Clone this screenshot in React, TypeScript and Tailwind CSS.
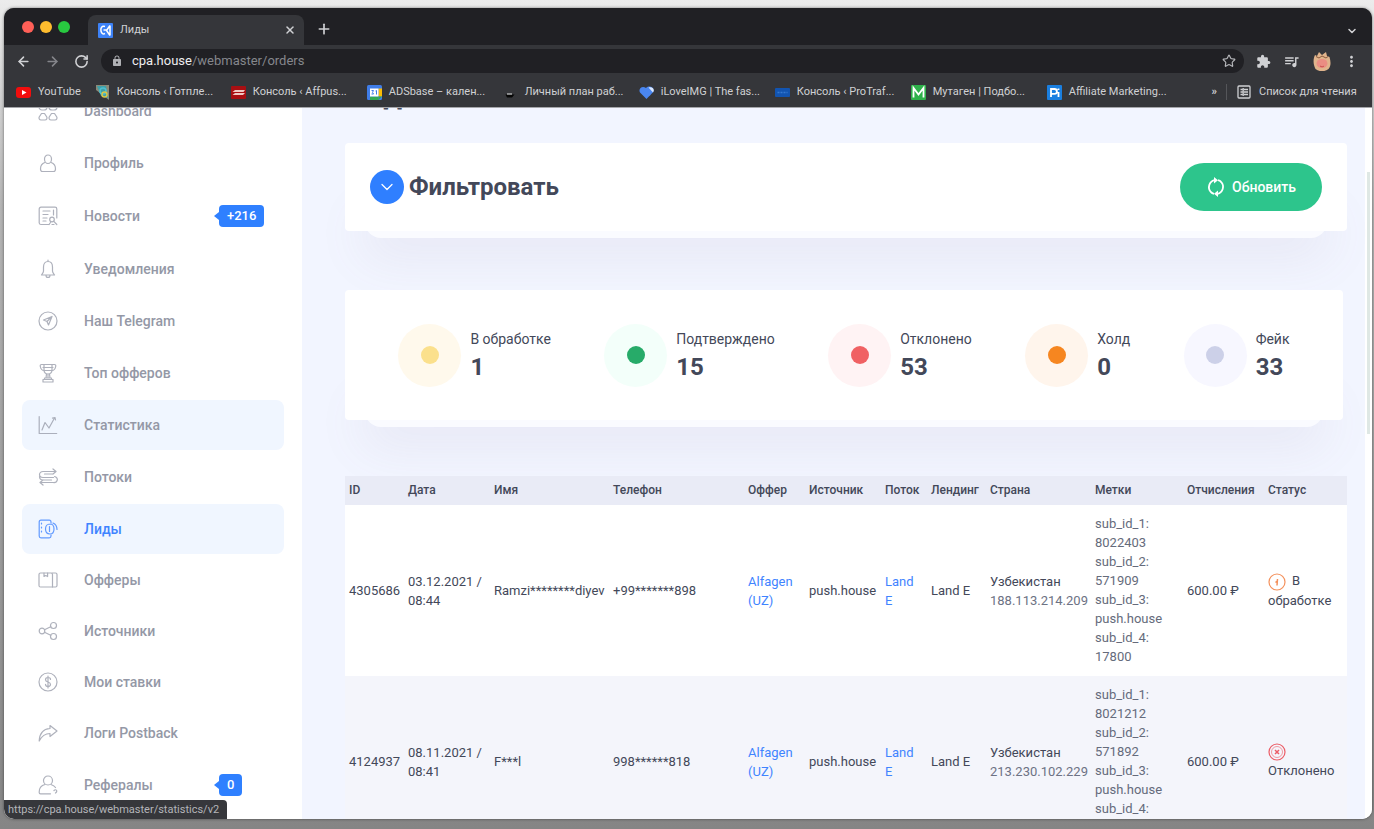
import type { ReactNode } from "react";
import { ArrowLeft, ArrowRight, ChevronDown, Plus, RotateCw, Star, X } from "lucide-react";
import { MdExtension, MdLock, MdMoreVert, MdQueueMusic } from "react-icons/md";

type NavItem = { label: string; icon: ReactNode; state?: "hover" | "active"; badge?: string };

function Line({ children }: { children: ReactNode }) {
  return (
    <svg
      className="size-5 shrink-0"
      viewBox="0 0 20 20"
      fill="none"
      stroke="currentColor"
      strokeWidth="1.2"
      strokeLinecap="round"
      strokeLinejoin="round"
      aria-hidden="true"
    >
      {children}
    </svg>
  );
}

const primaryNav: NavItem[] = [
  {
    label: "Dashboard",
    icon: (
      <Line>
        <rect x="1" y="1" width="8" height="8" rx="3" />
        <rect x="11" y="1" width="8" height="8" rx="3" />
        <path d="M3.5 12.5h3l2.3 3.5c.6 1.5-.2 3-1.8 3H3c-1.6 0-2.4-1.5-1.8-3zM13.5 12.5h3l2.3 3.5c.6 1.5-.2 3-1.8 3h-4c-1.6 0-2.4-1.5-1.8-3z" />
      </Line>
    ),
  },
  {
    label: "Профиль",
    icon: (
      <Line>
        <path d="M6.5 6a3.5 4 0 0 1 7 0c0 2.5-1.5 4.5-3.5 4.5S6.5 8.5 6.5 6z" />
        <path d="M6.8 9.5C4 10.5 2.5 12.5 2.5 16c0 1.500.5 2.5 2 2.5h11c1.5 0 2-1 2-2.5 0-3.500-1.5-5.500-4.300-6.500" />
      </Line>
    ),
  },
  {
    label: "Новости",
    badge: "+216",
    icon: (
      <Line>
        <path d="M11 18.500H3A1.800 1.800 0 0 1 1.200 17V3A1.800 1.800 0 0 1 3 1.200h14A1.800 1.800 0 0 1 18.800 3v9" />
        <path d="M5 5h7M5 8.500h5M5 12h4M5 15h3M15.500 4v5" />
        <circle cx="14" cy="13.500" r="2.300" />
        <path d="m15.800 15.300 3 3.200M11 18.500l1.500-2M16 18.500h-2" />
      </Line>
    ),
  },
  {
    label: "Уведомления",
    icon: (
      <Line>
        <path d="M10 1v1.500M10 2.500c-3 0-4.500 2.500-4.500 5.500v4c0 2-1.500 2.500-2 4h13c-.5-1.500-2-2-2-4V8c0-3-1.500-5.500-4.500-5.500zM8 16.200c0 3 4 3 4 0" />
      </Line>
    ),
  },
  {
    label: "Наш Telegram",
    icon: (
      <Line>
        <circle cx="10" cy="10" r="9" />
        <path d="m5.500 9 8.500-3.500-3.500 8.500-1.500-3.500zM9 10.500l5-5" />
      </Line>
    ),
  },
  {
    label: "Топ офферов",
    icon: (
      <Line>
        <path d="M3.500 1.500h13c1 0 1.500.8 1.200 2-.5 2.500-1.700 4-3.700 4H6c-2 0-3.200-1.500-3.700-4-.3-1.200.2-2 1.200-2z" />
        <path d="M6 1.500v5c0 3 1.500 4.500 4 4.500s4-1.500 4-4.500v-5M5 4.500h10M8.500 11l-.5 4M11.500 11l.5 4M10 12v2M6.500 15h7v1.500h-7zM5 19h10v-2.500H5z" />
      </Line>
    ),
  },
  {
    label: "Статистика",
    state: "hover",
    icon: (
      <Line>
        <path d="M1.200 1.500v17h17.500" />
        <path d="m4 15 3-7.500 4 5.500 5.500-10M14.500 3.200l2.500-.7.500 2.500" />
      </Line>
    ),
  },
  {
    label: "Потоки",
    icon: (
      <Line>
        <path d="M15 2l3 2.500L15 7M18 4.500H5a3.500 3 0 0 0 0 6h10.500M15 7H6.500M5 13l-3 2.500L5 18M2 15.500h13a3.500 3 0 0 0 1.500-6M5 13h8.500M1.500 9.500c0 2 1 3.500 3.500 3.500" />
      </Line>
    ),
  },
  {
    label: "Лиды",
    state: "active",
    icon: (
      <Line>
        <path d="M13 4V3c0-1-.6-1.800-1.800-1.800H3C1.800 1.200 1.200 2 1.200 3v14c0 1 .6 1.800 1.800 1.800h8.200c1.200 0 1.800-.8 1.800-1.800v-1" />
        <path d="M3.500 4v12" strokeDasharray="1 3" />
        <path d="M12 5c-2.800 0-4.500 2.200-4.500 5s1.700 5 4.500 5 4-2.200 4-5-1.200-5-4-5zM11.500 7.500v5M15 4c2.500 1 4 3 4 6.500" />
      </Line>
    ),
  },
];

const secondaryNav: NavItem[] = [
  {
    label: "Офферы",
    icon: (
      <Line>
        <path d="M2.500 3h10.500c1 0 1.500.5 1.500 1.500v12.500H2.500c-1 0-1.500-.5-1.500-1.500v-11C1 3.500 1.500 3 2.500 3z" />
        <path d="M14 3h3.500c1 0 1.500.5 1.500 1.500v11c0 1-.5 1.500-1.500 1.500h-3M6 3v3.500l1.800-1 1.800 1V3" />
      </Line>
    ),
  },
  {
    label: "Источники",
    icon: (
      <Line>
        <circle cx="4" cy="10" r="2.800" />
        <circle cx="15.500" cy="4.500" r="3" />
        <circle cx="15.500" cy="15.500" r="3" />
        <path d="m6.500 8.800 6.200-3M6.500 11.200l6.200 3" />
      </Line>
    ),
  },
  {
    label: "Мои ставки",
    icon: (
      <Line>
        <circle cx="10" cy="10" r="9" />
        <path d="M12.500 7.500C12.500 6 11.500 5.500 10 5.500S7.500 6.300 7.500 7.700c0 3 5 1.600 5 4.600 0 1.400-1 2.200-2.500 2.200s-2.500-.7-2.500-2.200M10 4v12" />
      </Line>
    ),
  },
  {
    label: "Логи Postback",
    icon: (
      <Line>
        <path d="M12 2.500 19 8l-7 5.500V10.500c-5 0-8 2-10.800 7.500C1.500 10.500 5 6 12 5.500z" />
      </Line>
    ),
  },
  {
    label: "Рефералы",
    badge: "0",
    icon: (
      <Line>
        <circle cx="10" cy="5.500" r="4.500" />
        <path d="M7 9.500c-4 1-6 3.500-5.800 8 0 .8.500 1.300 1.300 1.300h10M13 9.500c2 .7 3.500 1.500 4.500 3M16 15.500c2-2 4 .5 1.500 2.500" />
      </Line>
    ),
  },
];

function NavRow({ item }: { item: NavItem }) {
  const tone =
    item.state === "active"
      ? "bg-[#f0f6ff] text-[#3f84ff] h-[50px]"
      : item.state === "hover"
        ? "bg-[#f0f6ff] text-[#9498a6] h-[50px]"
        : item.badge
          ? "text-[#9498a6] h-[52px]"
          : "text-[#9498a6] h-[50px]";
  return (
    <li>
      <a href="#" className={`flex items-center rounded-lg pl-4 ${tone}`}>
        <span className={item.state === "active" ? "opacity-80" : "opacity-75"}>{item.icon}</span>
        <span className="ml-[26px] w-[130px] text-[14px] leading-5 font-medium">{item.label}</span>
        {item.badge && (
          <span className="flex items-center">
            <span className="border-y-4 border-r-[5px] border-y-transparent border-r-[#2f80ff]" />
            <span className="rounded-[4px] bg-[#2f80ff] px-2 text-[13px] leading-[22px] font-medium text-white">
              {item.badge}
            </span>
          </span>
        )}
      </a>
    </li>
  );
}

const bookmarks: { label: string; icon: ReactNode }[] = [
  {
    label: "Консоль ‹ Готпле...",
    icon: (
      <>
        <path d="M1 0h13v15L1 5z" fill="#8a8a78" />
        <path d="M2 1h9l2 12-7-2z" fill="#3f9fa8" />
        <circle cx="8" cy="6" r="3" fill="none" stroke="#4fc0d0" strokeWidth="1.500" />
        <circle cx="9.500" cy="9.500" r="2.500" fill="none" stroke="#d8c648" strokeWidth="1.500" />
      </>
    ),
  },
  {
    label: "Консоль ‹ Affpus...",
    icon: (
      <>
        <rect y="1" width="15" height="13" rx="1" fill="#a80f12" />
        <path d="M1.500 7 4 5h10l-1.500 2zM1.500 10 4 8h10l-2 2z" fill="#f0c9c4" />
      </>
    ),
  },
  {
    label: "ADSbase – кален...",
    icon: (
      <>
        <rect width="15" height="15" rx="1.500" fill="#3f7de8" />
        <path d="M11.500 3.500H15v8h-3.500z" fill="#fbbc05" />
        <path d="M3 11.500h8.500V15H3z" fill="#34a853" />
        <path d="M3 3.500h8.500v8H3z" fill="#fff" />
        <path d="m4.500 5.500 2 0-1 1.800 1 1.700h-2M8.500 6l1-.5v4" fill="none" stroke="#3f7de8" />
        <path d="M11.500 15v-3.500H15z" fill="#34a853" />
      </>
    ),
  },
  {
    label: "Личный план раб...",
    icon: (
      <>
        <path d="M2.500 9.500h9L9 12.500H4z" fill="#060606" />
        <path d="M4 9h5" stroke="#e8e8e8" strokeWidth="1.200" />
      </>
    ),
  },
  {
    label: "iLoveIMG | The fas...",
    icon: (
      <>
        <path d="M7.500 14 1 7.500C-1 4 3 0 7 3c3-3 8-1 7.500 2.500C14.500 7 14 7.500 7.500 14z" fill="#4a86f0" />
        <path d="m9.500 2.500 4.500 5c1.500-2 1-6-4.500-5z" fill="#dce9ff" />
      </>
    ),
  },
  {
    label: "Консоль ‹ ProTraf...",
    icon: (
      <>
        <rect y="3" width="15" height="9" rx="1" fill="#1254b0" />
        <path d="M2.500 7.500h10" stroke="#3478d0" strokeWidth="1.500" strokeDasharray="2 1" />
      </>
    ),
  },
  {
    label: "Мутаген | Подбо...",
    icon: (
      <>
        <rect width="15" height="15" rx="1" fill="#2eb14a" />
        <path d="M2.500 12.500V3l5 6.500 5-6.500v9.500" fill="none" stroke="#fff" strokeWidth="1.800" />
      </>
    ),
  },
  {
    label: "Affiliate Marketing...",
    icon: (
      <>
        <rect width="15" height="15" rx="1" fill="#1a7fe0" />
        <path d="M4 12V4h3.500a2.300 2.300 0 0 1 0 4.800H4M11.500 7v5M11.500 3.500v1.500" fill="none" stroke="#fff" strokeWidth="1.800" />
      </>
    ),
  },
];

function BrowserChrome() {
  return (
    <header className="z-10 shrink-0 bg-[#35363a] text-[#d0d1d4]">
      <div className="flex h-[37px] items-end bg-[#202024]">
        <div className="flex w-[84px] shrink-0 gap-[6px] self-center pl-[18px]">
          <span className="size-3 rounded-full bg-[#ff5f57]" />
          <span className="size-3 rounded-full bg-[#febc2e]" />
          <span className="size-3 rounded-full bg-[#28c840]" />
        </div>
        <div className="flex h-[30px] w-[216px] items-center rounded-t-lg bg-[#35363a] pr-2 pl-[10px]">
          <svg className="size-[15px]" viewBox="0 0 15 15" aria-hidden="true">
            <rect width="15" height="15" rx="1" fill="#3d82f7" />
            <path d="M7 3.500C3.500 2.500 2.500 5.500 3 8s2 3.500 4 2.500M12 2.500 8.500 7.500l3.500 5M5.500 7h3M12 2.500v10" fill="none" stroke="#fff" strokeWidth="1.500" />
          </svg>
          <span className="ml-[7px] flex-1 text-[11px] leading-4">Лиды</span>
          <button type="button" aria-label="Закрыть вкладку">
            <X className="size-3" strokeWidth={3} />
          </button>
        </div>
        <button type="button" aria-label="Новая вкладка" className="mb-2 ml-3">
          <Plus className="size-4" strokeWidth={2.5} />
        </button>
        <button type="button" aria-label="Поиск вкладок" className="mr-[14px] mb-2 ml-auto">
          <ChevronDown className="size-3" strokeWidth={3} />
        </button>
      </div>

      <div className="flex h-8 items-center pr-3 pl-3">
        <button type="button" aria-label="Назад">
          <ArrowLeft className="size-[15px]" strokeWidth={2.5} />
        </button>
        <button type="button" aria-label="Вперёд" className="ml-[14px] text-[#84858a]">
          <ArrowRight className="size-[15px]" strokeWidth={2.5} />
        </button>
        <button type="button" aria-label="Обновить страницу" className="ml-[14px]">
          <RotateCw className="size-[15px]" strokeWidth={2.5} />
        </button>
        <div className="ml-3 flex h-6 flex-1 items-center rounded-full bg-[#202024] pr-2 pl-[10px]">
          <MdLock className="size-3 text-[#b0b1b5]" />
          <a href="#" className="ml-[9px] flex-1 text-[13px] leading-4 text-[#85878c]">
            <span className="text-[#eeeef0]">cpa.house</span>/webmaster/orders
          </a>
          <button type="button" aria-label="Добавить в закладки">
            <Star className="size-[14px] text-[#b5b6ba]" />
          </button>
        </div>
        <div className="ml-3 flex items-center gap-3">
          <button type="button" aria-label="Расширения">
            <MdExtension className="size-[15px]" />
          </button>
          <button type="button" aria-label="Управление медиа">
            <MdQueueMusic className="size-[17px]" />
          </button>
          <button type="button" aria-label="Профиль Chrome">
            <svg className="size-5" viewBox="0 0 20 20" aria-hidden="true">
              <path d="M3 4l2 1 2-4 3 3 4-3 1 4 2.500 1c1.500 5 1.500 9-1 12-4 3-9 3-13 0C1 13 1 8 3 4z" fill="#e0b48c" />
              <path d="M4 5.500l3 1.500 3-2 4 2 2-1.500" fill="none" stroke="#8a5a3c" />
              <ellipse cx="10" cy="12.500" rx="5.500" ry="4.500" fill="#ea8d83" />
              <path d="M8 15c1.500 1 3 1 4 0" stroke="#c94f4c" fill="none" />
            </svg>
          </button>
          <button type="button" aria-label="Меню" className="-ml-px">
            <MdMoreVert className="size-[17px]" />
          </button>
        </div>
      </div>

      <nav aria-label="Закладки" className="flex h-[30px] items-center px-3 text-[11px] leading-4 whitespace-nowrap">
        <a href="#" className="flex items-center gap-[7px]">
          <svg className="size-[15px]" viewBox="0 0 15 15" aria-hidden="true">
            <rect y="2" width="15" height="11" rx="3" fill="#f20d0d" />
            <path d="m6 5 4.500 2.500L6 10z" fill="#fff" />
          </svg>
          YouTube
        </a>
        <div className="ml-[14px] flex flex-1 gap-[15px] overflow-hidden">
          {bookmarks.map((b) => (
            <a key={b.label} href="#" className="flex shrink-0 items-center gap-[7px]">
              <svg className="size-[15px]" viewBox="0 0 15 15" aria-hidden="true">
                {b.icon}
              </svg>
              <span className="w-[99px]">{b.label}</span>
            </a>
          ))}
        </div>
        <button type="button" aria-label="Другие закладки" className="mr-[9px] font-bold">
          »
        </button>
        <button type="button" className="flex items-center gap-2 border-l border-[#55565a] pl-[10px]">
          <svg className="size-[14px]" viewBox="0 0 14 14" fill="none" stroke="currentColor" strokeWidth="1.300" aria-hidden="true">
            <rect x="1" y="1" width="12" height="12" rx="1" />
            <path d="M3.500 4.500h2M7 4.500h4M3.500 7h2M7 7h4M3.500 9.500h2M7 9.500h4M6.200 3v8" />
          </svg>
          <span className="w-[101px] text-left">Список для чтения</span>
        </button>
      </nav>
    </header>
  );
}

function Card({ children, className }: { children: ReactNode; className: string }) {
  return (
    <div className={`relative isolate ${className}`}>
      <span className="absolute inset-x-5 -bottom-[7px] -z-10 h-10 rounded-b-2xl bg-[#fafbff] shadow-[0_18px_48px_4px_rgba(130,110,140,0.09)]" />
      {children}
    </div>
  );
}

const stats = [
  { label: "В обработке", value: "1", ring: "bg-[#fff9ec]", dot: "bg-[#fbe08c]" },
  { label: "Подтверждено", value: "15", ring: "bg-[#f3fffa]", dot: "bg-[#27ab69]" },
  { label: "Отклонено", value: "53", ring: "bg-[#fff3f4]", dot: "bg-[#f06163]" },
  { label: "Холд", value: "0", ring: "bg-[#fff5ec]", dot: "bg-[#f68620]" },
  { label: "Фейк", value: "33", ring: "bg-[#f7f7ff]", dot: "bg-[#ccd0e8]" },
];

const columns = [
  { title: "ID", width: "w-[59px]" },
  { title: "Дата", width: "w-[86px]" },
  { title: "Имя", width: "w-[119px]" },
  { title: "Телефон", width: "" },
  { title: "Оффер", width: "w-[61px]" },
  { title: "Источник", width: "w-[76px]" },
  { title: "Поток", width: "w-[46px]" },
  { title: "Лендинг", width: "w-[59px]" },
  { title: "Страна", width: "w-[105px]" },
  { title: "Метки", width: "w-[92px]" },
  { title: "Отчисления", width: "w-[81px]" },
  { title: "Статус", width: "w-[83px]" },
];

const leads = [
  {
    id: "4305686",
    date: "03.12.2021 /",
    time: "08:44",
    name: "Ramzi********diyev",
    phone: "+99*******898",
    ip: "188.113.214.209",
    tags: ["8022403", "571909", "push.house", "17800"],
    status: "В обработке",
    pending: true,
  },
  {
    id: "4124937",
    date: "08.11.2021 /",
    time: "08:41",
    name: "F***l",
    phone: "998******818",
    ip: "213.230.102.229",
    tags: ["8021212", "571892", "push.house", "17800"],
    status: "Отклонено",
    pending: false,
  },
];

function StatusIcon({ pending }: { pending: boolean }) {
  return (
    <svg
      className={pending ? "mr-[6px] inline-block size-[18px] text-[#f4915c]" : "block size-[18px] text-[#ec5c66]"}
      viewBox="0 0 18 18"
      fill="none"
      stroke="currentColor"
      strokeWidth="1.200"
      aria-hidden="true"
    >
      <circle cx="9" cy="9" r="8" />
      {pending ? (
        <path d="M9.500 6 9 12.500M9.200 8 7.500 9.500" strokeWidth="1.500" />
      ) : (
        <>
          <circle cx="9" cy="9" r="5.500" strokeWidth="0.600" />
          <path d="m7 7 4 4M11 7l-4 4" strokeWidth="1.500" />
        </>
      )}
    </svg>
  );
}

export default function App() {
  return (
    <div className="h-screen overflow-hidden bg-linear-to-b from-[#ececec] via-[#b4b4b4] via-25% to-[#858585] pt-2 pr-[2px] pb-[10px] pl-1 font-[Roboto,sans-serif]">
      <div className="relative flex h-full flex-col overflow-hidden rounded-[10px] bg-white shadow-[0_0_3px_rgba(0,0,0,0.5)]">
        <BrowserChrome />

        <div className="flex min-h-0 flex-1 overflow-hidden border-t border-[#a5a6aa]">
          <aside className="w-[298px] shrink-0 bg-white px-[18px]">
            <nav aria-label="Разделы" className="-mt-[22px] flex flex-col gap-px">
              <ul className="flex flex-col gap-[2px]">
                {primaryNav.map((item) => (
                  <NavRow key={item.label} item={item} />
                ))}
              </ul>
              <ul className="flex flex-col gap-px">
                {secondaryNav.map((item) => (
                  <NavRow key={item.label} item={item} />
                ))}
              </ul>
            </nav>
          </aside>

          <main className="min-w-0 flex-1 bg-[#f2f5ff] pr-[18px] pl-[43px] text-[#434859]">
            <h1 className="-mt-[33px] text-[30px] leading-10 font-bold">Лиды</h1>

            <Card className="mt-7">
              <section className="flex h-[88px] items-center rounded-[4px] bg-white px-[25px]">
                <button
                  type="button"
                  aria-label="Показать фильтр"
                  className="flex size-[34px] items-center justify-center rounded-full bg-[#2f7fff] text-white"
                >
                  <ChevronDown className="size-5" strokeWidth={1.5} />
                </button>
                <h2 className="ml-[5px] text-[24px] leading-8 font-bold">Фильтровать</h2>
                <button
                  type="button"
                  className="ml-auto flex h-12 items-center gap-[6px] rounded-full bg-[#2dc58c] px-[26px] text-[14px] leading-5 font-medium text-white"
                >
                  <svg className="size-5" viewBox="0 0 20 20" fill="none" stroke="currentColor" strokeWidth="1.800" aria-hidden="true">
                    <path d="M4.800 15A7.200 7.200 0 0 1 8.500 3.200M15.200 5a7.200 7.200 0 0 1-3.700 11.800M12 3.200c1.200.3 2.300.9 3.200 1.800M8 16.800c-1.200-.3-2.300-.9-3.200-1.800" />
                    <path d="M8 0 12 3.200 8 6.400zM12 13.600 8 16.800 12 20z" fill="currentColor" stroke="none" />
                  </svg>
                  Обновить
                </button>
              </section>
            </Card>

            <Card className="mt-[59px] mr-1">
              <section className="flex h-[130px] items-center justify-evenly rounded-[4px] bg-white">
                {stats.map((s) => (
                  <div key={s.label} className="flex items-center gap-[9px]">
                    <span className={`flex size-[63px] items-center justify-center rounded-full ${s.ring}`}>
                      <span className={`size-[18px] rounded-full ${s.dot}`} />
                    </span>
                    <div>
                      <p className="text-[14px] leading-6">{s.label}</p>
                      <p className="text-[24px] leading-8 font-bold">{s.value}</p>
                    </div>
                  </div>
                ))}
              </section>
            </Card>

            <table className="relative mt-14 w-full table-fixed text-left text-[13px] leading-[19px]">
              <thead>
                <tr className="h-[29px] bg-[#e9ebf6] text-[12px]">
                  {columns.map((c) => (
                    <th key={c.title} scope="col" className={`pl-1 font-medium whitespace-nowrap ${c.width}`}>
                      {c.title}
                    </th>
                  ))}
                </tr>
              </thead>
              <tbody>
                {leads.map((lead) => (
                  <tr key={lead.id} className="bg-white even:bg-[#f4f5fb]">
                    <td className="pl-1">{lead.id}</td>
                    <td className="pl-1">
                      {lead.date}
                      <br />
                      {lead.time}
                    </td>
                    <td className="pl-1">{lead.name}</td>
                    <td className="pl-1">{lead.phone}</td>
                    <td className="pl-1">
                      <a href="#" className="text-[#3f84ff]">
                        Alfagen (UZ)
                      </a>
                    </td>
                    <td className="pl-1">push.house</td>
                    <td className="pr-1 pl-1">
                      <a href="#" className="text-[#3f84ff]">
                        Land E
                      </a>
                    </td>
                    <td className="pl-1">Land E</td>
                    <td className="pl-1">
                      Узбекистан
                      <br />
                      <span className="text-[#6d7284]">{lead.ip}</span>
                    </td>
                    <td className="pt-[9px] pb-[10px] pl-1 text-[#656b7b]">
                      {lead.tags.map((tag, i) => (
                        <p key={i}>
                          sub_id_{i + 1}:
                          <br />
                          {tag}
                        </p>
                      ))}
                    </td>
                    <td className="pl-1">600.00 ₽</td>
                    <td className="pl-1">
                      <StatusIcon pending={lead.pending} />
                      {lead.status}
                    </td>
                  </tr>
                ))}
              </tbody>
            </table>
          </main>

          <div className="w-[7px] shrink-0 bg-white pt-16 pl-[2px]">
            <div className="h-[262px] w-[3px] bg-[#dfe8e5]" />
          </div>
        </div>

        <div className="absolute bottom-0 left-0 rounded-tr-[4px] bg-[#36373b] pr-2 pl-1 text-[11px] leading-[19px] text-[#b4b5b9]">
          https://cpa.house/webmaster/statistics/v2
        </div>
      </div>
    </div>
  );
}
